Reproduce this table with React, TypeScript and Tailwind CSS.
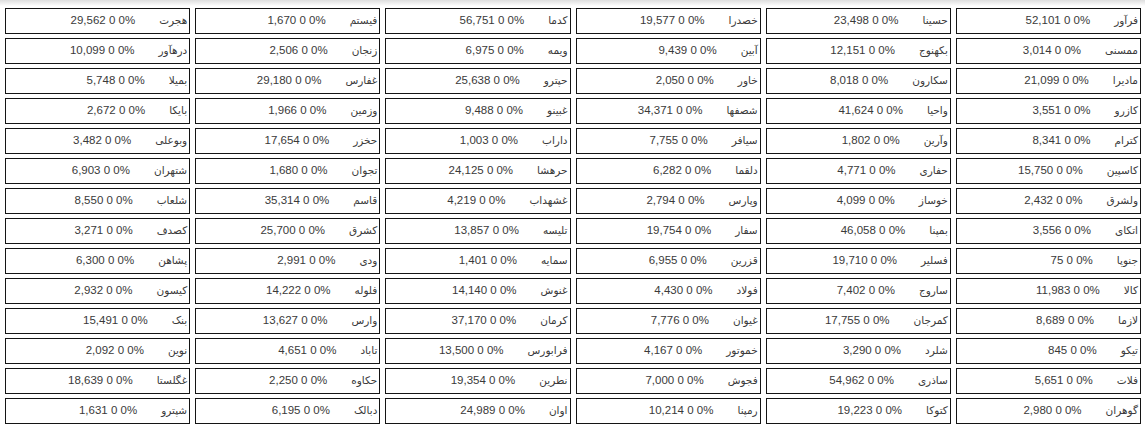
import React from "react";

type Quote = { name: string; price: string };

// each row listed right to left, as the table reads
const rows: Quote[][] = [
  [
    { name: "فرآور", price: "52,101" },
    { name: "حسینا", price: "23,498" },
    { name: "خصدرا", price: "19,577" },
    { name: "کدما", price: "56,751" },
    { name: "فیستم", price: "1,670" },
    { name: "هجرت", price: "29,562" },
  ],
  [
    { name: "ممسنی", price: "3,014" },
    { name: "بکهنوج", price: "12,151" },
    { name: "آبین", price: "9,439" },
    { name: "ویمه", price: "6,975" },
    { name: "زنجان", price: "2,506" },
    { name: "درهآور", price: "10,099" },
  ],
  [
    { name: "مادیرا", price: "21,099" },
    { name: "سکارون", price: "8,018" },
    { name: "خاور", price: "2,050" },
    { name: "حپترو", price: "25,638" },
    { name: "غفارس", price: "29,180" },
    { name: "بمیلا", price: "5,748" },
  ],
  [
    { name: "کازرو", price: "3,551" },
    { name: "واحیا", price: "41,624" },
    { name: "شصفها", price: "34,371" },
    { name: "غبینو", price: "9,488" },
    { name: "وزمین", price: "1,966" },
    { name: "بایکا", price: "2,672" },
  ],
  [
    { name: "کترام", price: "8,341" },
    { name: "وآرین", price: "1,802" },
    { name: "سیافر", price: "7,755" },
    { name: "داراب", price: "1,003" },
    { name: "حخزر", price: "17,654" },
    { name: "وبوعلی", price: "3,482" },
  ],
  [
    { name: "کاسپین", price: "15,750" },
    { name: "حفاری", price: "4,771" },
    { name: "دلقما", price: "6,282" },
    { name: "حرهشا", price: "24,125" },
    { name: "تجوان", price: "1,680" },
    { name: "شتهران", price: "6,903" },
  ],
  [
    { name: "ولشرق", price: "2,432" },
    { name: "خوساز", price: "4,099" },
    { name: "وپارس", price: "2,794" },
    { name: "غشهداب", price: "4,219" },
    { name: "قاسم", price: "35,314" },
    { name: "شلعاب", price: "8,550" },
  ],
  [
    { name: "اتکای", price: "3,556" },
    { name: "بمپنا", price: "46,058" },
    { name: "سفار", price: "19,754" },
    { name: "تلیسه", price: "13,857" },
    { name: "کشرق", price: "25,700" },
    { name: "کصدف", price: "3,271" },
  ],
  [
    { name: "جنوپا", price: "75" },
    { name: "فسلیر", price: "19,710" },
    { name: "قزرین", price: "6,955" },
    { name: "سمایه", price: "1,401" },
    { name: "ودی", price: "2,991" },
    { name: "پشاهن", price: "6,300" },
  ],
  [
    { name: "کالا", price: "11,983" },
    { name: "ساروج", price: "7,402" },
    { name: "فولاد", price: "4,430" },
    { name: "غنوش", price: "14,140" },
    { name: "فلوله", price: "14,222" },
    { name: "کیسون", price: "2,932" },
  ],
  [
    { name: "لازما", price: "8,689" },
    { name: "کمرجان", price: "17,755" },
    { name: "غیوان", price: "7,776" },
    { name: "کرمان", price: "37,170" },
    { name: "وارس", price: "13,627" },
    { name: "بنک", price: "15,491" },
  ],
  [
    { name: "تیکو", price: "845" },
    { name: "شلرد", price: "3,290" },
    { name: "خموتور", price: "4,167" },
    { name: "فرابورس", price: "13,500" },
    { name: "تاباد", price: "4,651" },
    { name: "نوین", price: "2,092" },
  ],
  [
    { name: "فلات", price: "5,651" },
    { name: "ساذری", price: "54,962" },
    { name: "فجوش", price: "7,000" },
    { name: "نطرین", price: "19,354" },
    { name: "حکاوه", price: "2,250" },
    { name: "غگلستا", price: "18,639" },
  ],
  [
    { name: "گوهران", price: "2,980" },
    { name: "کتوکا", price: "19,223" },
    { name: "رمپنا", price: "10,214" },
    { name: "اوان", price: "24,989" },
    { name: "دبالک", price: "6,195" },
    { name: "شپترو", price: "1,631" },
  ],
];

const QuoteCell = ({ q }: { q: Quote }) => (
  <div className="h-[26px] border border-[#141414] bg-white flex items-center gap-[24px] pr-[2px]">
    <span className="text-[10.5px] text-[#3a3a3a] whitespace-nowrap">{q.name}</span>
    <span dir="ltr" className="text-[11.5px] text-[#3a3a3a] whitespace-nowrap">
      {q.price} 0 0%
    </span>
  </div>
);

export default function App() {
  return (
    <div
      className="w-[1145px] h-[428px] bg-white overflow-hidden"
      style={{ fontFamily: '"Liberation Sans", "DejaVu Sans", sans-serif' }}
    >
      <div className="h-[6px] bg-gradient-to-b from-[#dedede] to-white" />
      <div dir="rtl" className="mt-[2px] pl-[5px] pr-[4px] grid grid-cols-6 gap-x-[5px] gap-y-[4px]">
        {rows.flat().map((q, i) => (
          <QuoteCell key={i} q={q} />
        ))}
      </div>
    </div>
  );
}
